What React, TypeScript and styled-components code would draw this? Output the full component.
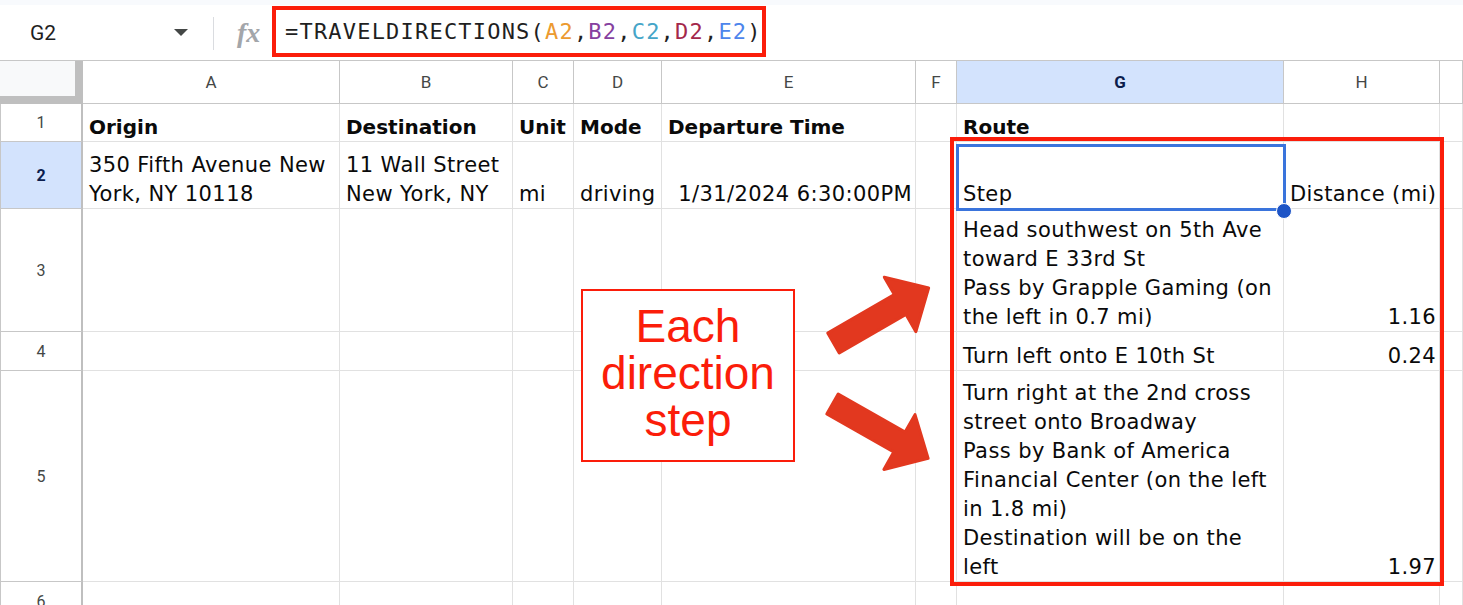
import React from 'react';
import styled, { createGlobalStyle, css } from 'styled-components';

const GlobalStyle = createGlobalStyle`
  html, body {
    margin: 0;
    padding: 0;
    background: #ffffff;
  }
  body {
    font-family: "DejaVu Sans", "Noto Sans", sans-serif;
  }
`;

const RED = '#fb1d0a';

const Page = styled.div`
  position: relative;
  width: 1463px;
  height: 605px;
  overflow: hidden;
  background: #ffffff;
`;

const TopStrip = styled.div`
  height: 5px;
  background: #f8fafd;
`;

const FormulaBar = styled.div`
  display: flex;
  align-items: flex-start;
  height: 55px;
  border-bottom: 1px solid #c7c7c7;
`;

const NameBox = styled.div`
  display: flex;
  align-items: center;
  justify-content: space-between;
  box-sizing: border-box;
  width: 201px;
  height: 55px;
  padding: 0 13px 0 30px;
  font-family: Roboto, "Liberation Sans", sans-serif;
  font-size: 21px;
  color: #1f1f1f;
`;

const Caret = styled.span`
  width: 0;
  height: 0;
  border-left: 7px solid transparent;
  border-right: 7px solid transparent;
  border-top: 7px solid #444746;
`;

const Divider = styled.div`
  width: 1px;
  height: 33px;
  margin: 12px 0 0 12px;
  background: #dadce0;
`;

const FxLabel = styled.div`
  width: 27px;
  height: 55px;
  display: flex;
  align-items: center;
  margin-left: 23px;
  font-family: "Liberation Serif", "DejaVu Serif", serif;
  font-style: italic;
  font-weight: 700;
  font-size: 28px;
  color: #a3a6aa;
`;

const FormulaBox = styled.div`
  display: flex;
  align-items: center;
  box-sizing: border-box;
  width: 494px;
  height: 51px;
  margin: 1px 0 0 8px;
  padding-left: 9px;
  border: 4px solid ${RED};
  font-family: "DejaVu Sans Mono", "Liberation Mono", monospace;
  font-size: 22px;
  letter-spacing: 1.2px;
  color: #1f1f1f;
  white-space: nowrap;
`;

const Ref = styled.span<{ $color: string }>`
  color: ${(p) => p.$color};
`;

const Sheet = styled.div`
  display: grid;
  grid-template-columns: 83px 257px 173px 61px 88px 254px 41px 327px 156px 1fr;
  grid-template-rows: 43px 38px 67px 123px 39px 211px 40px;
`;

const Corner = styled.div`
  box-sizing: border-box;
  background: #f8f9fa;
  border-right: 8px solid #bfbfbf;
  border-bottom: 8px solid #bfbfbf;
`;

const ColHeader = styled.div<{ $active?: boolean }>`
  display: flex;
  align-items: center;
  justify-content: center;
  box-sizing: border-box;
  border-right: 1px solid #c7c7c7;
  border-bottom: 1px solid #c7c7c7;
  font-family: Roboto, "Liberation Sans", sans-serif;
  font-size: 17px;
  color: #444746;
  background: #ffffff;
  ${(p) =>
    p.$active &&
    css`
      background: #d3e3fd;
      color: #0b1d4d;
      font-weight: 700;
    `}
`;

const RowHeader = styled.div<{ $active?: boolean }>`
  display: flex;
  align-items: center;
  justify-content: center;
  box-sizing: border-box;
  border-left: 1px solid #c7c7c7;
  border-right: 2px solid #bfbfbf;
  border-bottom: 1px solid #c7c7c7;
  font-family: Roboto, "Liberation Sans", sans-serif;
  font-size: 16px;
  color: #444746;
  background: #ffffff;
  ${(p) =>
    p.$active &&
    css`
      background: #d3e3fd;
      color: #0b1d4d;
      font-weight: 700;
    `}
`;

const Cell = styled.div<{ $right?: boolean; $bold?: boolean }>`
  display: flex;
  flex-direction: column;
  justify-content: flex-end;
  align-items: ${(p) => (p.$right ? 'flex-end' : 'flex-start')};
  box-sizing: border-box;
  min-width: 0;
  padding: 0 3px 1px 6px;
  border-right: 1px solid #e1e1e1;
  border-bottom: 1px solid #e1e1e1;
  font-size: 21px;
  letter-spacing: 0.4px;
  color: #0a0a0a;
  white-space: nowrap;
  ${(p) =>
    p.$bold &&
    css`
      font-size: 20px;
      font-weight: 700;
      letter-spacing: 0;
    `}
`;

const Line = styled.span`
  display: block;
  height: 29px;
  line-height: 33px;
`;

const RouteFrame = styled.div`
  position: absolute;
  left: 950px;
  top: 137px;
  width: 494px;
  height: 449px;
  box-sizing: border-box;
  border: 4px solid ${RED};
  pointer-events: none;
`;

const Selection = styled.div`
  position: absolute;
  left: 956px;
  top: 144px;
  width: 330px;
  height: 67px;
  box-sizing: border-box;
  border: 3px solid #3a74dc;
  pointer-events: none;
`;

const FillHandle = styled.div`
  position: absolute;
  left: 1276px;
  top: 203px;
  width: 14px;
  height: 14px;
  border-radius: 50%;
  background: #1d54c6;
  border: 1.5px solid #ffffff;
`;

const Callout = styled.div`
  position: absolute;
  left: 581px;
  top: 289px;
  width: 214px;
  height: 173px;
  box-sizing: border-box;
  display: flex;
  flex-direction: column;
  align-items: center;
  justify-content: center;
  padding-bottom: 4px;
  background: #ffffff;
  border: 2px solid ${RED};
  font-family: "Liberation Sans", Arial, sans-serif;
  font-size: 46px;
  line-height: 47px;
  color: ${RED};
  text-align: center;
`;

const Arrows = styled.svg`
  position: absolute;
  left: 815px;
  top: 265px;
  overflow: visible;
`;

type CellDef = { lines: string[]; right?: boolean; bold?: boolean };

const COLS = ['A', 'B', 'C', 'D', 'E', 'F', 'G', 'H', ''];

const h = (t: string): CellDef => ({ lines: [t], bold: true });
const t = (...lines: string[]): CellDef => ({ lines });
const n = (v: string): CellDef => ({ lines: [v], right: true });
const e: CellDef = { lines: [] };

const ROWS: CellDef[][] = [
  [h('Origin'), h('Destination'), h('Unit'), h('Mode'), h('Departure Time'), e, h('Route'), e, e],
  [
    t('350 Fifth Avenue New', 'York, NY 10118'),
    t('11 Wall Street', 'New York, NY'),
    t('mi'),
    t('driving'),
    n('1/31/2024 6:30:00PM'),
    e,
    t('Step'),
    t('Distance (mi)'),
    e,
  ],
  [
    e, e, e, e, e, e,
    t('Head southwest on 5th Ave', 'toward E 33rd St', 'Pass by Grapple Gaming (on', 'the left in 0.7 mi)'),
    n('1.16'),
    e,
  ],
  [e, e, e, e, e, e, t('Turn left onto E 10th St'), n('0.24'), e],
  [
    e, e, e, e, e, e,
    t(
      'Turn right at the 2nd cross',
      'street onto Broadway',
      'Pass by Bank of America',
      'Financial Center (on the left',
      'in 1.8 mi)',
      'Destination will be on the',
      'left'
    ),
    n('1.97'),
    e,
  ],
  [e, e, e, e, e, e, e, e, e],
];

const ARROW_COLOR = '#e2381f';
const arrowPoints = '0,-11.5 77,-11.5 77,-31.5 110,0 77,31.5 77,11.5 0,11.5';

function FormulaText() {
  return (
    <FormulaBox>
      =TRAVELDIRECTIONS(
      <Ref $color="#ec9a2f">A2</Ref>,<Ref $color="#86409f">B2</Ref>,
      <Ref $color="#45a5c8">C2</Ref>,<Ref $color="#a3284b">D2</Ref>,
      <Ref $color="#4d85ec">E2</Ref>)
    </FormulaBox>
  );
}

export default function App() {
  return (
    <Page>
      <GlobalStyle />
      <TopStrip />
      <FormulaBar>
        <NameBox>
          G2
          <Caret />
        </NameBox>
        <Divider />
        <FxLabel>fx</FxLabel>
        <FormulaText />
      </FormulaBar>

      <Sheet>
        <Corner />
        {COLS.map((c, i) => (
          <ColHeader key={i} $active={c === 'G'}>
            {c}
          </ColHeader>
        ))}
        {ROWS.map((row, r) => (
          <React.Fragment key={r}>
            <RowHeader $active={r === 1}>{r + 1}</RowHeader>
            {row.map((cell, c) => (
              <Cell key={c} $right={cell.right} $bold={cell.bold}>
                {cell.lines.map((line, k) => (
                  <Line key={k}>{line}</Line>
                ))}
              </Cell>
            ))}
          </React.Fragment>
        ))}
      </Sheet>

      <RouteFrame />
      <Selection />
      <FillHandle />

      <Callout>
        <span>Each</span>
        <span>direction</span>
        <span>step</span>
      </Callout>

      <Arrows width="130" height="215" viewBox="0 0 130 215">
        <polygon
          transform="translate(18.5 78) rotate(-30.1)"
          points={arrowPoints}
          fill={ARROW_COLOR}
          stroke={ARROW_COLOR}
          strokeWidth="3"
          strokeLinejoin="round"
        />
        <polygon
          transform="translate(17.5 139) rotate(29.6)"
          points={arrowPoints}
          fill={ARROW_COLOR}
          stroke={ARROW_COLOR}
          strokeWidth="3"
          strokeLinejoin="round"
        />
      </Arrows>
    </Page>
  );
}
